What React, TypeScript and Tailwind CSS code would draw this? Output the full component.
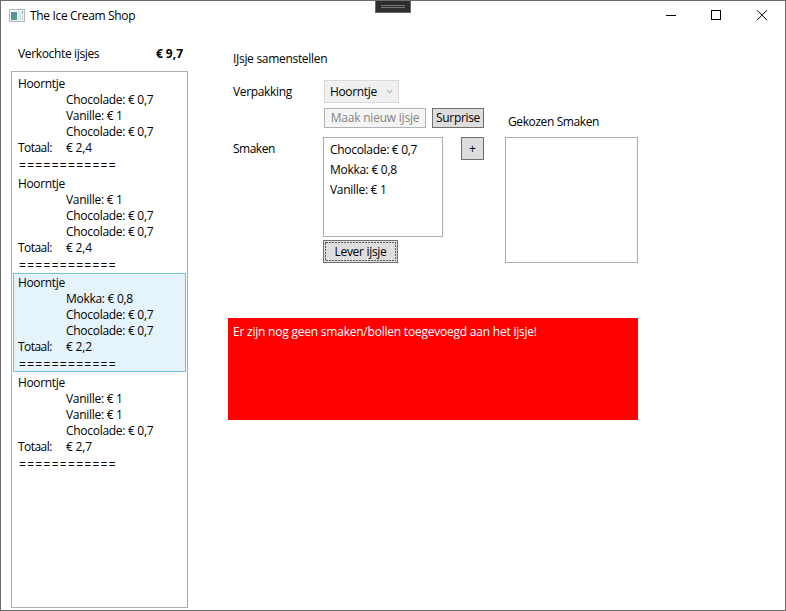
import React from "react";

type Order = { lines: string[]; total: string; selected?: boolean; size: string };

const orders: Order[] = [
  { lines: ["Chocolade: € 0,7", "Vanille: € 1", "Chocolade: € 0,7"], total: "€ 2,4", size: "h-[100px]" },
  { lines: ["Vanille: € 1", "Chocolade: € 0,7", "Chocolade: € 0,7"], total: "€ 2,4", size: "h-[99px]" },
  { lines: ["Mokka: € 0,8", "Chocolade: € 0,7", "Chocolade: € 0,7"], total: "€ 2,2", selected: true, size: "h-[99px] mb-px" },
  { lines: ["Vanille: € 1", "Vanille: € 1", "Chocolade: € 0,7"], total: "€ 2,7", size: "h-[100px]" },
];

function TitleBar() {
  return (
    <header className="flex h-[30px] items-center pl-2">
      <svg width="16" height="14" viewBox="0 0 16 14" className="shrink-0">
        <defs>
          <linearGradient id="pane" x1="0" y1="0" x2="1" y2="1">
            <stop offset="0" stopColor="#5b86ad" />
            <stop offset="1" stopColor="#4fa583" />
          </linearGradient>
        </defs>
        <rect x="0.5" y="0.5" width="15" height="12" fill="#f0f1f2" stroke="#b3b7bb" />
        <rect x="2" y="3" width="6" height="8" fill="url(#pane)" />
        <rect x="9" y="3" width="3" height="8" fill="#dfe5e8" />
        <rect x="13" y="2" width="1" height="2" fill="#6fa3b8" />
        <rect x="13" y="4" width="1" height="7" fill="#cfd8de" />
      </svg>
      <span className="ml-[5px] tracking-[-0.34px]">The Ice Cream Shop</span>
      <svg width="106" height="12" viewBox="0 0 106 12" className="mr-[15px] ml-auto" fill="none" stroke="#000" shapeRendering="crispEdges">
        <path d="M2 5.5h10" />
        <rect x="47.5" y="0.5" width="9" height="9" />
        <path d="M93 0.2l10 10M103 0.2l-10 10" shapeRendering="auto" />
      </svg>
    </header>
  );
}

function OrderItem({ order }: { order: Order }) {
  return (
    <li className={`${order.size} shrink-0 border px-1 pt-[1px] ${order.selected ? "border-[#70c0e7] bg-[#e5f3fb]" : "border-transparent"}`}>
      <div className="tracking-[-0.35px]">Hoorntje</div>
      {order.lines.map((line, i) => (
        <div key={i} className="pl-12 tracking-[-0.29px]">{line}</div>
      ))}
      <div className="flex">
        <span className="w-12 tracking-[-0.55px]">Totaal:</span>
        <span className="tracking-[-0.2px]">{order.total}</span>
      </div>
      <div className="pt-[2px] pl-px tracking-[1.3px]">============</div>
    </li>
  );
}

export default function App() {
  return (
    <div className="relative h-[611px] w-[786px] overflow-hidden border border-[#6b6b6e] bg-white font-['Open_Sans',sans-serif] text-[12px] leading-4 whitespace-nowrap text-black">
      <div className="absolute top-[-1px] left-[374px] flex h-[13px] w-9 flex-col items-center gap-px border border-[#6b6b6e] bg-[#2d2d30] pt-1">
        <div className="h-px w-6 bg-[#77777a]" />
        <div className="h-px w-6 bg-[#77777a]" />
      </div>
      <div className="absolute top-[-1px] right-[-1px] h-[25px] w-[14px] border-t border-r border-[#1e1e1e]" />
      <TitleBar />
      <main className="flex">
        <section className="ml-[10px] w-[177px] pt-[15px]">
          <div className="flex h-[25px] justify-between pr-[5px] pl-[7px]">
            <span className="tracking-[-0.35px]">Verkochte ijsjes</span>
            <span className="font-bold tracking-[0px]">€ 9,7</span>
          </div>
          <ul className="flex h-[537px] flex-col border border-[#abadb3] px-px pt-[2px]">
            {orders.map((order, i) => (
              <OrderItem key={i} order={order} />
            ))}
          </ul>
        </section>
        <section className="ml-10 w-[410px] pt-5">
          <h1 className="h-[29px] pl-[5px] tracking-[-0.3px]">IJsje samenstellen</h1>
          <div className="flex">
            <div className="flex w-[95px] flex-col gap-[41px] pt-1 pl-[5px]">
              <span className="tracking-[-0.35px]">Verpakking</span>
              <span className="tracking-[-0.5px]">Smaken</span>
            </div>
            <div className="w-[161px]">
              <div className="ml-px flex h-[23px] w-[75px] items-center justify-between border border-[#d9d9d9] bg-[#f0f0f0] pr-[5px] pl-[5px]">
                <span className="tracking-[-0.35px]">Hoorntje</span>
                <svg width="7" height="6" viewBox="0 0 7 6" fill="none" stroke="#bfbfbf" strokeWidth="1.4">
                  <path d="M1 1l2.5 3L6 1" />
                </svg>
              </div>
              <div className="mt-[5px] ml-px flex gap-1.5">
                <button className="h-5 w-[102px] border border-[#adb2b5] bg-[#f4f4f4] tracking-[-0.22px] text-[#838383]">Maak nieuw ijsje</button>
                <button className="h-5 w-[52px] border border-[#707070] bg-[#dddddd] tracking-[-0.35px]">Surprise</button>
              </div>
              <div className="mt-[9px] flex items-start justify-between">
                <ul className="h-[100px] w-[120px] border border-[#abadb3] px-1.5 pt-[2px] leading-5 tracking-[-0.3px]">
                  <li>Chocolade: € 0,7</li>
                  <li>Mokka: € 0,8</li>
                  <li>Vanille: € 1</li>
                </ul>
                <button className="h-[23px] w-[23px] border border-[#707070] bg-[#dddddd]">+</button>
              </div>
              <button className="relative mt-[3px] block h-[23px] w-[75px] border border-[#707070] bg-[#dddddd] tracking-[-0.3px]">
                <svg className="absolute top-px left-px" width="71" height="19" viewBox="0 0 71 19" fill="none" stroke="#5c5c5c" strokeDasharray="2 1" shapeRendering="crispEdges">
                  <rect x="0.5" y="0.5" width="70" height="18" />
                </svg>
                Lever ijsje
              </button>
            </div>
            <div className="ml-[21px] w-[133px] pt-[34px]">
              <div className="h-[23px] pl-[3px] tracking-[-0.4px]">Gekozen Smaken</div>
              <div className="h-[126px] border border-[#abadb3]" />
            </div>
          </div>
          <div className="mt-[55px] h-[102px] bg-[#ff0000] px-[5px] pt-[6px] tracking-[-0.22px] text-white">
            Er zijn nog geen smaken/bollen toegevoegd aan het ijsje!
          </div>
        </section>
      </main>
    </div>
  );
}
